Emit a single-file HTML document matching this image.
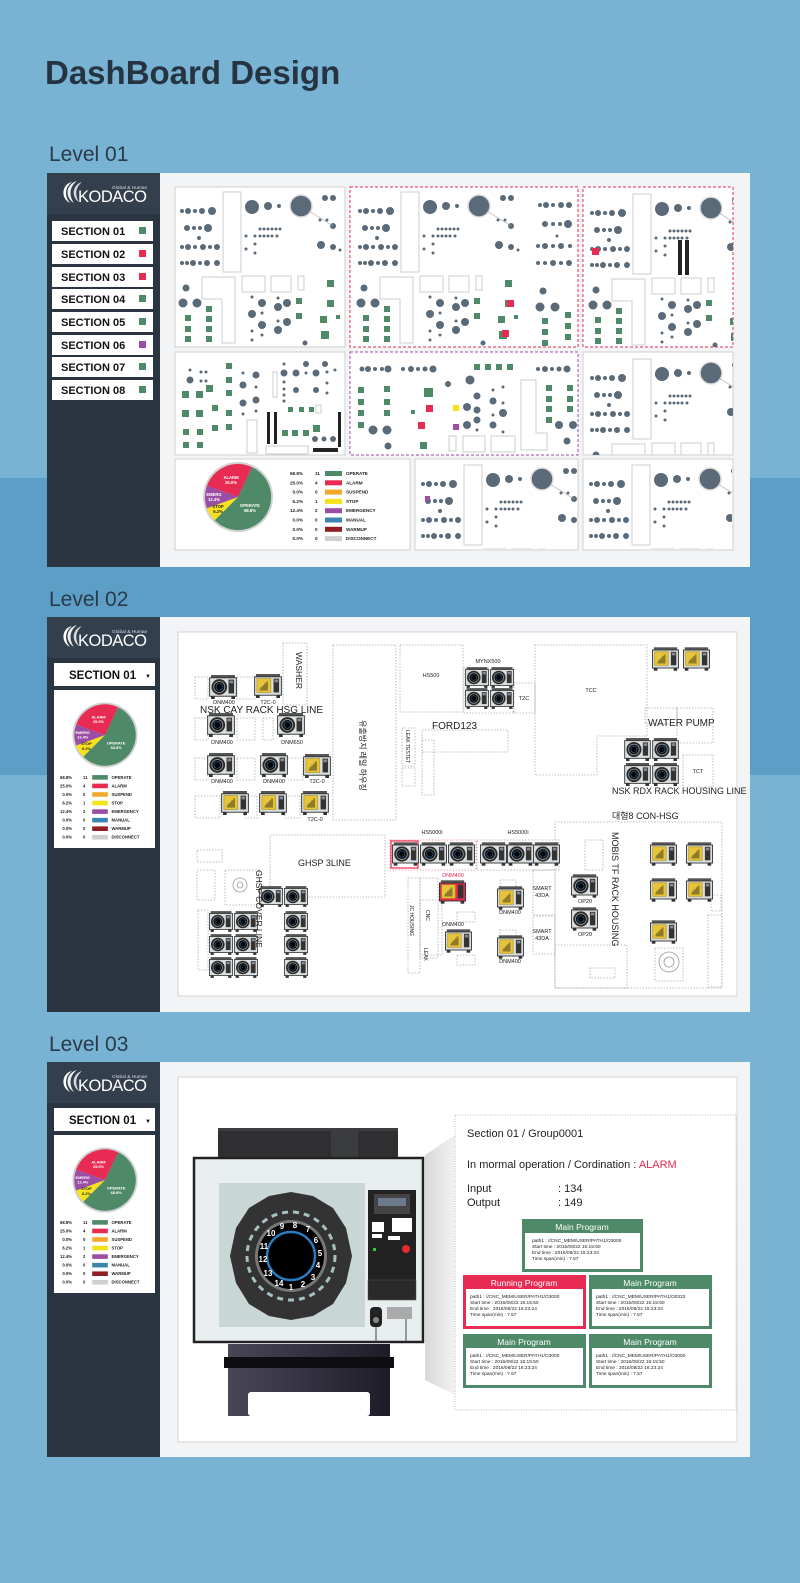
<!DOCTYPE html>
<html><head><meta charset="utf-8"><style>
html,body{margin:0;padding:0;background:#78b3d3;}
svg{display:block}
text{font-family:"Liberation Sans","Noto Sans CJK KR",sans-serif}
</style></head><body>
<svg width="800" height="1583" viewBox="0 0 800 1583" xmlns="http://www.w3.org/2000/svg">
<defs>
<symbol id="m" viewBox="0 0 30 26">
<rect x="2" y="0" width="26" height="3" fill="#555"/>
<rect x="0.5" y="3" width="29" height="20" fill="#d9dfe0" stroke="#333" stroke-width="1"/>
<circle cx="11" cy="13" r="8.5" fill="#2a2a2a"/>
<circle cx="11" cy="13" r="6" fill="#111" stroke="#aaa" stroke-width="0.8"/>
<circle cx="11" cy="13" r="3.5" fill="#000" stroke="#2a7bc0" stroke-width="0.6"/>
<rect x="21" y="5" width="6" height="15" fill="#333"/>
<rect x="22" y="6" width="4" height="3" fill="#889"/>
<rect x="2" y="23" width="4" height="3" fill="#333"/><rect x="24" y="23" width="4" height="3" fill="#333"/>
</symbol>
<symbol id="y" viewBox="0 0 30 26">
<rect x="2" y="0" width="26" height="3" fill="#555"/>
<rect x="0.5" y="3" width="29" height="20" fill="#d9dfe0" stroke="#333" stroke-width="1"/>
<rect x="3" y="5" width="15" height="15" fill="#e8c43a" stroke="#b6971e" stroke-width="0.8"/>
<path d="M6 18 L15 18 L15 8 L13 8 L13 10 L11 10 L11 12 L9 12 L9 14 L7 14 L7 16 L6 16 Z" fill="#8d7a2b"/>
<rect x="21" y="5" width="6" height="15" fill="#333"/>
<rect x="22" y="6" width="4" height="3" fill="#889"/>
<rect x="2" y="23" width="4" height="3" fill="#333"/><rect x="24" y="23" width="4" height="3" fill="#333"/>
</symbol>
<symbol id="yr" viewBox="0 0 30 26">
<rect x="2" y="0" width="26" height="3" fill="#555"/>
<rect x="0.5" y="3" width="29" height="20" fill="#e8284c" stroke="#333" stroke-width="1"/>
<rect x="3" y="5" width="15" height="15" fill="#e8c43a" stroke="#b6971e" stroke-width="0.8"/>
<path d="M6 18 L15 18 L15 8 L13 8 L13 10 L11 10 L11 12 L9 12 L9 14 L7 14 L7 16 L6 16 Z" fill="#8d7a2b"/>
<rect x="21" y="5" width="6" height="15" fill="#333"/>
<rect x="2" y="23" width="4" height="3" fill="#333"/><rect x="24" y="23" width="4" height="3" fill="#333"/>
</symbol>
<g id="panelA">
<g fill="#5a6a78">
<circle cx="7" cy="24" r="2"/><circle cx="13" cy="24" r="3"/><circle cx="20" cy="24" r="2"/><circle cx="27" cy="24" r="3"/><circle cx="37" cy="24" r="4"/>
<circle cx="12" cy="41" r="3"/><circle cx="19" cy="41" r="2"/><circle cx="25" cy="41" r="2"/><circle cx="33" cy="41" r="4"/>
<circle cx="24" cy="51" r="2"/>
<circle cx="7" cy="60" r="2"/><circle cx="13" cy="60" r="3"/><circle cx="20" cy="60" r="2"/><circle cx="28" cy="60" r="3"/><circle cx="35" cy="60" r="2"/><circle cx="42" cy="60" r="3"/>
<circle cx="7" cy="76" r="2"/><circle cx="12" cy="76" r="2"/><circle cx="18" cy="76" r="3"/><circle cx="25" cy="76" r="2"/><circle cx="32" cy="76" r="3"/><circle cx="42" cy="76" r="3"/>
<circle cx="77" cy="20" r="7"/><circle cx="93" cy="19" r="4"/><circle cx="104" cy="19" r="2"/>
<circle cx="126" cy="19" r="11" stroke="#ddd" stroke-width="1.5"/>
<circle cx="150" cy="11" r="3"/><circle cx="158" cy="11" r="3"/>
<circle cx="85" cy="42" r="1.5"/><circle cx="89" cy="42" r="1.5"/><circle cx="93" cy="42" r="1.5"/><circle cx="97" cy="42" r="1.5"/><circle cx="101" cy="42" r="1.5"/><circle cx="105" cy="42" r="1.5"/>
<circle cx="80" cy="49" r="1.5"/><circle cx="85" cy="49" r="1.5"/><circle cx="89" cy="49" r="1.5"/><circle cx="93" cy="49" r="1.5"/><circle cx="97" cy="49" r="1.5"/><circle cx="102" cy="49" r="1.5"/>
<circle cx="71" cy="49" r="1.5"/><circle cx="71" cy="62" r="1.5"/><circle cx="80" cy="57" r="1.5"/><circle cx="80" cy="66" r="1.5"/>
<circle cx="145" cy="33" r="1.5"/><circle cx="152" cy="33" r="1.5"/><circle cx="158" cy="39" r="3"/>
<circle cx="146" cy="58" r="4"/><circle cx="158" cy="60" r="3"/><circle cx="165" cy="63" r="1.5"/>
<circle cx="11" cy="101" r="3.5"/><circle cx="8" cy="116" r="4.5"/><circle cx="22" cy="116" r="4.5"/>
<circle cx="77" cy="110" r="1.5"/><circle cx="87" cy="116" r="4"/><circle cx="77" cy="127" r="4"/><circle cx="87" cy="126" r="1.5"/><circle cx="87" cy="138" r="4"/><circle cx="77" cy="144" r="1.5"/><circle cx="87" cy="148" r="1.5"/><circle cx="77" cy="153" r="1.5"/>
<circle cx="103" cy="111" r="1.5"/><circle cx="112" cy="116" r="4"/><circle cx="103" cy="120" r="4"/><circle cx="103" cy="134" r="1.5"/><circle cx="112" cy="135" r="4"/><circle cx="103" cy="143" r="4"/>
<circle cx="130" cy="156" r="2.5"/>
</g>
<line x1="134" y1="24" x2="158" y2="39" stroke="#aaa" stroke-width="0.6"/>
<g fill="none" stroke="#ccc" stroke-width="1">
<rect x="48" y="5" width="18" height="80"/>
<path d="M27 90 L60 90 L60 156 L47 156 L47 112 L27 112 Z"/>
<rect x="67" y="89" width="23" height="16"/><rect x="96" y="89" width="20" height="16"/><rect x="123" y="89" width="6" height="14"/>
</g>
<g fill="#4f8a68">
<rect x="10" y="128" width="6" height="6"/><rect x="10" y="139" width="6" height="6"/><rect x="10" y="149" width="6" height="6"/>
<rect x="31" y="119" width="6" height="6"/><rect x="31" y="129" width="6" height="6"/><rect x="31" y="139" width="6" height="6"/><rect x="31" y="149" width="6" height="6"/>
<rect x="121" y="111" width="6" height="6"/><rect x="121" y="126" width="6" height="6"/>
<rect x="152" y="93" width="7" height="7"/><rect x="152" y="113" width="7" height="7"/><rect x="145" y="129" width="7" height="7"/><rect x="161" y="128" width="4" height="4"/><rect x="146" y="144" width="8" height="8"/>
</g>
</g>
<g id="pie">
<circle cx="0" cy="0" r="35" fill="#d0d0d0"/>
<path d="M0 0 L14 -29.9 A33 33 0 1 1 -23.3 23.3 Z" fill="#4f8a68"/>
<path d="M0 0 L-23.3 23.3 A33 33 0 0 1 -31 11.3 Z" fill="#f6e21c"/>
<path d="M0 0 L-31 11.3 A33 33 0 0 1 -31 -11.3 Z" fill="#9b4ea6"/>
<path d="M0 0 L-31 -11.3 A33 33 0 0 1 14 -29.9 Z" fill="#e82b52"/>
<g font-size="4.2" font-weight="bold" fill="#fff" text-anchor="middle">
<text x="-7" y="-18">ALARM</text><text x="-7" y="-13">25.0%</text>
<text x="-24" y="-1">EMERG</text><text x="-24" y="4">12.4%</text>
<text x="-20" y="11" fill="#222">STOP</text><text x="-20" y="16" fill="#222">6.2%</text>
<text x="12" y="10">OPERATE</text><text x="12" y="15">68.8%</text>
</g>
</g>
<g id="legend" font-size="4.6" font-weight="bold" fill="#222">
<text x="13" y="3" text-anchor="end">68.8%</text><text x="25" y="3">11</text><rect x="35" y="-1" width="17" height="5" fill="#4f8a68"/><text x="56" y="3">OPERATE</text>
<text x="13" y="12.3" text-anchor="end">25.0%</text><text x="25" y="12.3">4</text><rect x="35" y="8.3" width="17" height="5" fill="#e82b52"/><text x="56" y="12.3">ALARM</text>
<text x="13" y="21.6" text-anchor="end">0.0%</text><text x="25" y="21.6">0</text><rect x="35" y="17.6" width="17" height="5" fill="#f0a92a"/><text x="56" y="21.6">SUSPEND</text>
<text x="13" y="30.9" text-anchor="end">6.2%</text><text x="25" y="30.9">1</text><rect x="35" y="26.9" width="17" height="5" fill="#f6e21c"/><text x="56" y="30.9">STOP</text>
<text x="13" y="40.2" text-anchor="end">12.4%</text><text x="25" y="40.2">2</text><rect x="35" y="36.2" width="17" height="5" fill="#9b4ea6"/><text x="56" y="40.2">EMERGENCY</text>
<text x="13" y="49.5" text-anchor="end">0.0%</text><text x="25" y="49.5">0</text><rect x="35" y="45.5" width="17" height="5" fill="#3b84b0"/><text x="56" y="49.5">MANUAL</text>
<text x="13" y="58.8" text-anchor="end">0.0%</text><text x="25" y="58.8">0</text><rect x="35" y="54.8" width="17" height="5" fill="#8f1d22"/><text x="56" y="58.8">WARMUP</text>
<text x="13" y="68.1" text-anchor="end">0.0%</text><text x="25" y="68.1">0</text><rect x="35" y="64.1" width="17" height="5" fill="#cfcfcf"/><text x="56" y="68.1">DISCONNECT</text>
</g>
<g id="logo">
<path d="M20 6 C10 8 8 22 18 27 C12 20 13 11 20 6 Z" fill="#fff"/>
<path d="M25 5 C14 8 12 21 22 27 C17 20 17 11 25 5 Z" fill="#fff" opacity="0.9"/>
<path d="M30 6 C20 9 19 21 27 26 C23 19 23 12 30 6 Z" fill="#fff" opacity="0.8"/>
<text x="26" y="26" font-size="16.5" fill="#fff" letter-spacing="-0.5">KODACO</text>
<text x="60" y="13" font-size="4.8" fill="#dde">Global &amp; Human</text>
</g>
<clipPath id="cC"><rect x="0" y="0" width="148" height="158"/></clipPath>
<clipPath id="cS"><rect x="0" y="0" width="148" height="101"/></clipPath>
<clipPath id="cT"><rect x="0" y="0" width="161" height="89"/></clipPath>
<clipPath id="cI"><rect x="0" y="0" width="148" height="89"/></clipPath>
<linearGradient id="bg3" x1="0" x2="1"><stop offset="0" stop-color="#4a4658"/><stop offset="1" stop-color="#1e1c28"/></linearGradient>
<linearGradient id="sh" x1="0" x2="1"><stop offset="0" stop-color="#d8d8d8"/><stop offset="1" stop-color="#f2f2f2"/></linearGradient>
</defs>

<rect x="0" y="0" width="800" height="1583" fill="#78b3d3"/>
<rect x="0" y="478" width="800" height="297" fill="#5d9ec6"/>

<text x="45" y="84" font-size="33" font-weight="bold" fill="#263442">DashBoard Design</text>
<text x="49" y="161" font-size="21" fill="#2a3a4a">Level 01</text>
<text x="49" y="606" font-size="21" fill="#2a3a4a">Level 02</text>
<text x="49" y="1051" font-size="21" fill="#2a3a4a">Level 03</text>

<!-- LEVEL 01 -->
<rect x="47" y="173" width="703" height="394" fill="#f3f4f6"/>
<rect x="47" y="173" width="113" height="394" fill="#2b3541"/>
<rect x="47" y="173" width="113" height="41" fill="#333f4c"/>
<use href="#logo" x="52" y="176"/>
<g font-size="11" font-weight="bold" fill="#111">
<rect x="52" y="221" width="101" height="20" fill="#fff"/><text x="61" y="235">SECTION 01</text><rect x="139" y="227" width="7" height="7" fill="#4f8a68"/>
<rect x="52" y="244" width="101" height="20" fill="#fff"/><text x="61" y="258">SECTION 02</text><rect x="139" y="250" width="7" height="7" fill="#e82b52"/>
<rect x="52" y="267" width="101" height="20" fill="#fff"/><text x="61" y="281">SECTION 03</text><rect x="139" y="273" width="7" height="7" fill="#e82b52"/>
<rect x="52" y="289" width="101" height="20" fill="#fff"/><text x="61" y="303">SECTION 04</text><rect x="139" y="295" width="7" height="7" fill="#4f8a68"/>
<rect x="52" y="312" width="101" height="20" fill="#fff"/><text x="61" y="326">SECTION 05</text><rect x="139" y="318" width="7" height="7" fill="#4f8a68"/>
<rect x="52" y="335" width="101" height="20" fill="#fff"/><text x="61" y="349">SECTION 06</text><rect x="139" y="341" width="7" height="7" fill="#9b4ea6"/>
<rect x="52" y="357" width="101" height="20" fill="#fff"/><text x="61" y="371">SECTION 07</text><rect x="139" y="363" width="7" height="7" fill="#4f8a68"/>
<rect x="52" y="380" width="101" height="20" fill="#fff"/><text x="61" y="394">SECTION 08</text><rect x="139" y="386" width="7" height="7" fill="#4f8a68"/>
</g>

<g fill="#fff" stroke="#cfcfcf">
<rect x="175" y="187" width="170" height="160"/>
<rect x="175" y="352" width="170" height="103"/>
<rect x="583" y="352" width="150" height="103"/>
<rect x="175" y="459" width="235" height="91"/>
<rect x="415" y="459" width="163" height="91"/>
<rect x="583" y="459" width="150" height="91"/>
</g>
<rect x="350" y="187" width="228" height="160" fill="#fff" stroke="#e82b52" stroke-dasharray="3,2"/>
<rect x="583" y="187" width="150" height="160" fill="#fff" stroke="#e82b52" stroke-dasharray="3,2"/>
<rect x="350" y="352" width="228" height="103" fill="#fff" stroke="#9b4ea6" stroke-dasharray="3,2"/>

<use href="#panelA" x="175" y="187"/>
<use href="#panelA" x="353" y="187"/>
<g fill="#5a6a78">
<circle cx="540" cy="205" r="2"/><circle cx="546" cy="205" r="3"/><circle cx="553" cy="205" r="2"/><circle cx="561" cy="205" r="3"/><circle cx="569" cy="205" r="3"/>
<circle cx="545" cy="224" r="3"/><circle cx="553" cy="224" r="2"/><circle cx="560" cy="224" r="2"/><circle cx="568" cy="224" r="4"/>
<circle cx="557" cy="236" r="1.5"/>
<circle cx="538" cy="246" r="2"/><circle cx="545" cy="246" r="3"/><circle cx="553" cy="246" r="2"/><circle cx="561" cy="246" r="3"/><circle cx="570" cy="246" r="2"/>
<circle cx="538" cy="263" r="2"/><circle cx="545" cy="263" r="2"/><circle cx="553" cy="263" r="3"/><circle cx="561" cy="263" r="2"/><circle cx="569" cy="263" r="3"/>
<circle cx="543" cy="291" r="3.5"/><circle cx="540" cy="307" r="4.5"/><circle cx="555" cy="307" r="4.5"/>
</g>
<g fill="#4f8a68"><rect x="542" y="318" width="6" height="6"/><rect x="542" y="329" width="6" height="6"/><rect x="542" y="340" width="6" height="6"/><rect x="565" y="312" width="6" height="6"/><rect x="565" y="323" width="6" height="6"/><rect x="565" y="334" width="6" height="6"/></g>
<g fill="#e82b52"><rect x="507" y="300" width="7" height="7"/><rect x="502" y="330" width="7" height="7"/></g>
<!-- panel C -->
<g transform="translate(585,189)"><use href="#panelA" clip-path="url(#cC)"/></g>
<rect x="592" y="248" width="7" height="7" fill="#e82b52"/>
<rect x="678" y="240" width="4" height="35" fill="#222"/><rect x="685" y="240" width="4" height="35" fill="#222"/>
<!-- panel D -->
<g fill="#5a6a78">
<circle cx="190" cy="370" r="1.5"/><circle cx="190" cy="380" r="3.5"/><circle cx="201" cy="372" r="1.5"/><circle cx="206" cy="372" r="1.5"/><circle cx="201" cy="381" r="1.5"/><circle cx="206" cy="381" r="1.5"/>
<circle cx="243" cy="373" r="1.5"/><circle cx="256" cy="375" r="3.5"/><circle cx="243" cy="385" r="3.5"/><circle cx="256" cy="387" r="1.5"/><circle cx="243" cy="403" r="3.5"/><circle cx="256" cy="400" r="3.5"/><circle cx="243" cy="414" r="1.5"/><circle cx="256" cy="411" r="1.5"/>
<circle cx="284" cy="364" r="1.5"/><circle cx="284" cy="373" r="3.5"/><circle cx="296" cy="373" r="3.5"/><circle cx="306" cy="364" r="3"/><circle cx="306" cy="373" r="1.5"/><circle cx="316" cy="373" r="3.5"/><circle cx="325" cy="364" r="3"/><circle cx="327" cy="372" r="1.5"/><circle cx="335" cy="370" r="1.5"/>
<circle cx="284" cy="382" r="1.5"/><circle cx="284" cy="389" r="1.5"/><circle cx="284" cy="395" r="1.5"/><circle cx="284" cy="401" r="1.5"/><circle cx="296" cy="390" r="3"/><circle cx="316" cy="390" r="3"/><circle cx="327" cy="383" r="1.5"/><circle cx="327" cy="393" r="1.5"/>
<circle cx="315" cy="439" r="3"/><circle cx="324" cy="439" r="2.5"/><circle cx="333" cy="439" r="3"/>
</g>
<g fill="#4f8a68">
<rect x="182" y="391" width="7" height="7"/><rect x="182" y="410" width="7" height="7"/><rect x="183" y="429" width="6" height="6"/><rect x="183" y="442" width="6" height="6"/>
<rect x="196" y="391" width="7" height="7"/><rect x="196" y="410" width="7" height="7"/><rect x="197" y="429" width="6" height="6"/><rect x="197" y="442" width="6" height="6"/>
<rect x="206" y="385" width="7" height="7"/><rect x="212" y="405" width="6" height="6"/><rect x="212" y="425" width="6" height="6"/>
<rect x="226" y="363" width="6" height="6"/><rect x="226" y="377" width="6" height="6"/><rect x="226" y="390" width="6" height="6"/><rect x="226" y="410" width="6" height="6"/><rect x="226" y="424" width="6" height="6"/>
<rect x="288" y="407" width="5" height="5"/><rect x="299" y="407" width="5" height="5"/><rect x="309" y="407" width="5" height="5"/>
<rect x="282" y="430" width="6" height="6"/><rect x="292" y="430" width="6" height="6"/><rect x="303" y="430" width="6" height="6"/><rect x="313" y="425" width="7" height="7"/>
</g>
<g fill="#222"><rect x="267" y="412" width="3" height="32"/><rect x="274" y="412" width="3" height="32"/><rect x="338" y="412" width="3" height="35"/><rect x="313" y="448" width="25" height="4"/></g>
<g fill="none" stroke="#ccc"><rect x="247" y="420" width="10" height="33"/><rect x="266" y="446" width="42" height="8"/><rect x="273" y="372" width="4" height="25"/><rect x="316" y="405" width="5" height="8"/></g>
<!-- panel E -->
<g fill="#5a6a78">
<circle cx="362" cy="369" r="2.5"/><circle cx="368" cy="369" r="3"/><circle cx="375" cy="369" r="2"/><circle cx="382" cy="369" r="2"/><circle cx="388" cy="369" r="3.5"/>
<circle cx="403" cy="369" r="2"/><circle cx="411" cy="369" r="3"/><circle cx="418" cy="369" r="2"/><circle cx="425" cy="369" r="2.5"/><circle cx="433" cy="369" r="3.5"/>
<circle cx="448" cy="384" r="3"/><circle cx="470" cy="380" r="4.5"/>
<circle cx="467" cy="407" r="4"/><circle cx="477" cy="396" r="3.5"/><circle cx="477" cy="410" r="3.5"/><circle cx="477" cy="420" r="3.5"/><circle cx="467" cy="425" r="4"/><circle cx="477" cy="430" r="1.5"/>
<circle cx="493" cy="390" r="1.5"/><circle cx="503" cy="387" r="1.5"/><circle cx="493" cy="401" r="3.5"/><circle cx="503" cy="403" r="1.5"/><circle cx="503" cy="413" r="4"/><circle cx="493" cy="415" r="1.5"/><circle cx="493" cy="425" r="3.5"/><circle cx="503" cy="432" r="1.5"/>
<circle cx="373" cy="430" r="4.5"/><circle cx="387" cy="430" r="4.5"/><circle cx="388" cy="446" r="3.5"/>
<circle cx="538" cy="369" r="2"/><circle cx="545" cy="369" r="3"/><circle cx="552" cy="369" r="2"/><circle cx="559" cy="369" r="2.5"/><circle cx="567" cy="369" r="3.5"/>
<circle cx="559" cy="425" r="4"/><circle cx="573" cy="425" r="4"/><circle cx="567" cy="441" r="3.5"/>
</g>
<g fill="#4f8a68">
<rect x="358" y="387" width="6" height="6"/><rect x="358" y="399" width="6" height="6"/><rect x="358" y="410" width="6" height="6"/><rect x="358" y="422" width="6" height="6"/>
<rect x="384" y="386" width="6" height="6"/><rect x="384" y="399" width="6" height="6"/><rect x="384" y="410" width="6" height="6"/>
<rect x="424" y="388" width="9" height="9"/><rect x="411" y="410" width="4" height="4"/><rect x="420" y="442" width="7" height="7"/>
<rect x="474" y="364" width="6" height="6"/><rect x="485" y="364" width="6" height="6"/><rect x="496" y="364" width="6" height="6"/><rect x="507" y="364" width="6" height="6"/>
<rect x="546" y="385" width="6" height="6"/><rect x="546" y="396" width="6" height="6"/><rect x="546" y="406" width="6" height="6"/><rect x="546" y="417" width="6" height="6"/>
<rect x="567" y="385" width="6" height="6"/><rect x="567" y="396" width="6" height="6"/><rect x="567" y="406" width="6" height="6"/>
</g>
<rect x="426" y="405" width="7" height="7" fill="#e82b52"/><rect x="418" y="422" width="7" height="7" fill="#e82b52"/>
<rect x="453" y="405" width="6" height="6" fill="#f6e21c"/><rect x="453" y="424" width="6" height="6" fill="#9b4ea6"/>
<g fill="none" stroke="#ccc"><rect x="449" y="436" width="7" height="15"/><rect x="463" y="436" width="22" height="16"/><rect x="491" y="436" width="24" height="16"/><path d="M521 380 L536 380 L536 433 L547 433 L547 450 L521 450 Z"/></g>
<!-- panel F -->
<g transform="translate(585,354)"><use href="#panelA" clip-path="url(#cS)"/></g>
<!-- panel G pie -->
<use href="#pie" x="238" y="497"/>
<use href="#legend" x="290" y="472"/>
<!-- panel H -->
<g transform="translate(416,460)"><use href="#panelA" clip-path="url(#cT)"/></g>
<rect x="425" y="496" width="5" height="5" fill="#9b4ea6"/>
<!-- panel I -->
<g transform="translate(584,460)"><use href="#panelA" clip-path="url(#cI)"/></g>

<!-- LEVEL 02 -->
<rect x="47" y="617" width="703" height="395" fill="#f3f4f6"/>
<rect x="47" y="617" width="113" height="395" fill="#2b3541"/>
<rect x="47" y="617" width="113" height="41" fill="#333f4c"/>
<use href="#logo" x="52" y="620"/>
<rect x="54" y="663" width="101" height="23" fill="#fff"/>
<text x="69" y="679" font-size="11.5" font-weight="bold" fill="#111">SECTION 01</text><text x="145" y="678" font-size="6" fill="#111">▼</text>
<rect x="54" y="690" width="101" height="158" fill="#fff"/>
<use href="#pie" transform="translate(105,735) scale(0.93)"/>
<use href="#legend" transform="translate(60,776) scale(0.92)"/>

<rect x="178" y="632" width="559" height="364" fill="#fff" stroke="#d5d5d5"/>
<g fill="none" stroke="#aaa" stroke-dasharray="1.5,1.5" stroke-width="0.8">
<rect x="283" y="643" width="24" height="62"/>
<rect x="333" y="645" width="63" height="175"/>
<rect x="400" y="645" width="63" height="67"/>
<rect x="464" y="668" width="50" height="45"/>
<rect x="513" y="683" width="22" height="30"/>
<path d="M535 645 L647 645 L647 736 L597 736 L597 775 L535 775 Z"/>
<rect x="402" y="728" width="13" height="38"/><rect x="402" y="768" width="13" height="18"/>
<rect x="422" y="730" width="86" height="22"/><rect x="422" y="740" width="12" height="55"/>
<rect x="645" y="708" width="32" height="16"/><rect x="677" y="708" width="36" height="35"/>
<rect x="683" y="755" width="30" height="32"/>
<rect x="195" y="677" width="13" height="22"/><rect x="237" y="677" width="18" height="22"/><rect x="195" y="718" width="13" height="22"/><rect x="237" y="718" width="18" height="22"/><rect x="263" y="718" width="10" height="22"/>
<rect x="195" y="758" width="13" height="22"/><rect x="237" y="758" width="18" height="22"/><rect x="285" y="758" width="18" height="22"/>
<rect x="195" y="796" width="25" height="22"/><rect x="245" y="796" width="12" height="22"/><rect x="285" y="796" width="15" height="22"/>
<rect x="270" y="835" width="115" height="62"/>
<rect x="197" y="850" width="25" height="12"/><rect x="197" y="870" width="18" height="30"/><rect x="225" y="870" width="35" height="35"/><rect x="198" y="910" width="10" height="60"/>
<rect x="390" y="840" width="86" height="30" stroke="#e88"/><rect x="477" y="840" width="82" height="30"/>
<rect x="420" y="878" width="18" height="80"/><rect x="408" y="878" width="12" height="95"/><rect x="420" y="900" width="22" height="55"/>
<rect x="533" y="870" width="22" height="45"/><rect x="533" y="916" width="22" height="38"/>
<rect x="500" y="880" width="16" height="10"/><rect x="500" y="930" width="16" height="10"/><rect x="457" y="912" width="18" height="10"/><rect x="457" y="955" width="18" height="10"/>
<rect x="555" y="822" width="167" height="166"/>
<rect x="585" y="840" width="18" height="30"/><rect x="555" y="945" width="72" height="43"/><rect x="590" y="968" width="25" height="10"/>
<rect x="655" y="948" width="28" height="33"/><rect x="708" y="915" width="14" height="72"/><rect x="711" y="895" width="10" height="16"/>
</g>
<circle cx="669" cy="962" r="10" fill="none" stroke="#999" stroke-width="0.8"/><circle cx="669" cy="962" r="5" fill="none" stroke="#999" stroke-width="0.8"/>
<circle cx="240" cy="885" r="7" fill="none" stroke="#999" stroke-width="0.8"/><circle cx="240" cy="885" r="3" fill="none" stroke="#999" stroke-width="0.8"/>

<g>
<use href="#m" x="209" y="675" width="28" height="24"/><use href="#y" x="254" y="674" width="28" height="24"/>
<use href="#m" x="207" y="713" width="28" height="24"/><use href="#m" x="277" y="713" width="28" height="24"/>
<use href="#m" x="207" y="753" width="28" height="24"/><use href="#m" x="260" y="753" width="28" height="24"/><use href="#y" x="303" y="754" width="28" height="24"/>
<use href="#y" x="221" y="791" width="28" height="24"/><use href="#y" x="259" y="791" width="28" height="24"/><use href="#y" x="301" y="791" width="28" height="24"/>
<use href="#m" x="465" y="667" width="24" height="21"/><use href="#m" x="490" y="667" width="24" height="21"/><use href="#m" x="465" y="688" width="24" height="21"/><use href="#m" x="490" y="688" width="24" height="21"/>
<use href="#y" x="652" y="647" width="27" height="24"/><use href="#y" x="683" y="647" width="27" height="24"/>
<use href="#m" x="624" y="738" width="27" height="23"/><use href="#m" x="652" y="738" width="27" height="23"/><use href="#m" x="624" y="763" width="27" height="23"/><use href="#m" x="652" y="763" width="27" height="23"/>
<rect x="391" y="841" width="27" height="27" fill="none" stroke="#e82b52" stroke-width="1.2"/>
<use href="#m" x="392" y="842" width="27" height="24"/><use href="#m" x="420" y="842" width="27" height="24"/><use href="#m" x="448" y="842" width="27" height="24"/>
<use href="#m" x="480" y="842" width="27" height="24"/><use href="#m" x="507" y="842" width="27" height="24"/><use href="#m" x="533" y="842" width="27" height="24"/>
<use href="#yr" x="439" y="880" width="27" height="24"/>
<use href="#y" x="445" y="929" width="27" height="24"/><use href="#y" x="497" y="886" width="27" height="24"/><use href="#y" x="497" y="935" width="27" height="24"/>
<use href="#m" x="571" y="874" width="27" height="24"/><use href="#m" x="571" y="907" width="27" height="24"/>
<use href="#y" x="650" y="842" width="27" height="24"/><use href="#y" x="686" y="842" width="27" height="24"/><use href="#y" x="650" y="878" width="27" height="24"/><use href="#y" x="686" y="878" width="27" height="24"/><use href="#y" x="650" y="920" width="27" height="24"/>
<use href="#m" x="259" y="886" width="24" height="21"/><use href="#m" x="284" y="886" width="24" height="21"/>
<use href="#m" x="209" y="911" width="24" height="21"/><use href="#m" x="234" y="911" width="24" height="21"/><use href="#m" x="284" y="911" width="24" height="21"/>
<use href="#m" x="209" y="934" width="24" height="21"/><use href="#m" x="234" y="934" width="24" height="21"/><use href="#m" x="284" y="934" width="24" height="21"/>
<use href="#m" x="209" y="957" width="24" height="21"/><use href="#m" x="234" y="957" width="24" height="21"/><use href="#m" x="284" y="957" width="24" height="21"/>
</g>
<g font-size="5.5" fill="#222" text-anchor="middle">
<text x="224" y="704">DNM400</text><text x="268" y="704">T2C-0</text>
<text x="222" y="744">DNM400</text><text x="292" y="744">DNM650</text>
<text x="222" y="783">DNM400</text><text x="274" y="783">DNM400</text><text x="317" y="783">T2C-0</text><text x="315" y="821">T2C-0</text>
<text x="488" y="663">MYNX500</text><text x="431" y="677">HS500</text><text x="524" y="700">T2C</text><text x="591" y="692">TCC</text><text x="698" y="773">TCT</text>
<text x="432" y="834">HS5000i</text><text x="518" y="834">HS5000i</text>
<text x="453" y="877" fill="#e82b52">DNM400</text><text x="453" y="926">DNM400</text><text x="510" y="914">DNM400</text><text x="510" y="963">DNM400</text>
<text x="542" y="890">SMART</text><text x="542" y="897">43DA</text><text x="542" y="933">SMART</text><text x="542" y="940">43DA</text>
<text x="585" y="903">OP20</text><text x="585" y="936">OP20</text>
</g>
<g font-size="10" fill="#222">
<text x="200" y="713">NSK CAY RACK HSG LINE</text>
<text x="432" y="729">FORD123</text>
<text x="648" y="726">WATER PUMP</text>
<text x="612" y="794" font-size="9">NSK RDX RACK HOUSING LINE</text>
<text x="612" y="819" font-size="9">대형8 CON-HSG</text>
<text x="298" y="866" font-size="9">GHSP 3LINE</text>
</g>
<g font-size="8.5" fill="#222">
<text transform="translate(296,652) rotate(90)">WASHER</text>
<text transform="translate(360,720) rotate(90)" font-size="8">유출방지 레일 하우징</text>
<text transform="translate(406,730) rotate(90)" font-size="5">LEAK TESTET</text>
<text transform="translate(256,870) rotate(90)">GHSP COVER LINE</text>
<text transform="translate(612,832) rotate(90)" font-size="9">MOBIS TF RACK HOUSING</text>
<text transform="translate(410,905) rotate(90)" font-size="5">JC HOUSING</text>
<text transform="translate(426,910) rotate(90)" font-size="5">CNC</text>
<text transform="translate(424,948) rotate(90)" font-size="5">LEAK</text>
</g>

<!-- LEVEL 03 -->
<rect x="47" y="1062" width="703" height="395" fill="#f3f4f6"/>
<rect x="47" y="1062" width="113" height="395" fill="#2b3541"/>
<rect x="47" y="1062" width="113" height="41" fill="#333f4c"/>
<use href="#logo" x="52" y="1065"/>
<rect x="54" y="1108" width="101" height="23" fill="#fff"/>
<text x="69" y="1124" font-size="11.5" font-weight="bold" fill="#111">SECTION 01</text><text x="145" y="1123" font-size="6" fill="#111">▼</text>
<rect x="54" y="1135" width="101" height="158" fill="#fff"/>
<use href="#pie" transform="translate(105,1180) scale(0.93)"/>
<use href="#legend" transform="translate(60,1221) scale(0.92)"/>

<rect x="178" y="1077" width="559" height="365" fill="#fff" stroke="#d5d5d5"/>
<path d="M425 1155 L455 1135 L455 1395 L425 1380 Z" fill="url(#sh)"/>
<rect x="218" y="1128" width="180" height="30" fill="#2f2f31"/>
<rect x="218" y="1128" width="180" height="3" fill="#3d3d3f"/>
<rect x="331" y="1131" width="27" height="27" fill="#3b3c3e"/>
<rect x="194" y="1158" width="229" height="184" fill="#e8eef0" stroke="#222" stroke-width="2.5"/>
<rect x="219" y="1183" width="146" height="144" fill="#c9d6d6"/>
<polygon points="291,1192 313,1196 333,1208 346,1228 352,1256 346,1283 333,1304 313,1316 291,1320 269,1316 249,1304 236,1283 230,1256 236,1228 249,1208 269,1196" fill="#333"/>
<circle cx="291" cy="1256" r="44" fill="none" stroke="#a7c0c4" stroke-width="3" stroke-dasharray="6,5"/>
<circle cx="291" cy="1256" r="36" fill="#777"/>
<circle cx="291" cy="1256" r="33" fill="#000"/>
<circle cx="291" cy="1256" r="24" fill="#000" stroke="#2a7bc0" stroke-width="2.5"/>
<g font-size="8" fill="#fff" text-anchor="middle" font-weight="bold">
<text x="291" y="1290">1</text><text x="303" y="1287">2</text><text x="313" y="1280">3</text><text x="318" y="1268">4</text><text x="320" y="1256">5</text><text x="316" y="1243">6</text><text x="308" y="1232">7</text><text x="295" y="1228">8</text><text x="282" y="1229">9</text><text x="271" y="1236">10</text><text x="264" y="1249">11</text><text x="263" y="1262">12</text><text x="268" y="1276">13</text><text x="279" y="1286">14</text>
</g>
<rect x="368" y="1190" width="48" height="110" fill="#222"/>
<rect x="374" y="1194" width="36" height="20" fill="#444"/><rect x="378" y="1198" width="28" height="8" fill="#6a7a88"/>
<g fill="#fff"><rect x="372" y="1222" width="12" height="10"/><rect x="392" y="1218" width="20" height="14"/><rect x="372" y="1234" width="10" height="4"/><rect x="388" y="1236" width="12" height="4"/></g>
<circle cx="406" cy="1249" r="4" fill="#e82b2b"/><rect x="373" y="1248" width="3" height="3" fill="#3c3"/>
<rect x="368" y="1280" width="48" height="20" fill="#2a2a2a" stroke="#555" stroke-width="0.5"/>
<rect x="370" y="1307" width="12" height="20" rx="4" fill="#222"/><circle cx="376" cy="1320" r="3" fill="#888"/>
<rect x="387" y="1307" width="25" height="12" fill="#aaa"/>
<line x1="376" y1="1327" x2="376" y2="1342" stroke="#444"/><line x1="406" y1="1319" x2="406" y2="1342" stroke="#444"/>
<rect x="228" y="1344" width="162" height="72" fill="url(#bg3)"/>
<rect x="224" y="1357" width="170" height="11" fill="#0e0e12"/>
<rect x="248" y="1392" width="122" height="24" fill="#fff" rx="3"/>

<rect x="455" y="1115" width="281" height="295" fill="#fff" stroke="#bbb" stroke-dasharray="1,1.5"/>
<g font-size="11" fill="#222">
<text x="467" y="1137">Section 01 / Group0001</text>
<text x="467" y="1168">In mormal operation  /  Cordination : <tspan fill="#e82b52">ALARM</tspan></text>
<text x="467" y="1192">Input</text><text x="558" y="1192">: 134</text>
<text x="467" y="1206">Output</text><text x="558" y="1206">: 149</text>
</g>
<g font-size="4.8" fill="#222">
<rect x="522" y="1219" width="121" height="53" fill="#4f8a68"/><rect x="525" y="1233" width="115" height="36" fill="#fff"/>
<text x="582" y="1230" text-anchor="middle" font-size="8.5" fill="#fff">Main Program</text>
<text x="532" y="1242">path1 : //CNC_MEM/USER/PATH1/O3000</text><text x="532" y="1248">Start time   : 2016/08/22 16:15:50</text><text x="532" y="1254">End time     : 2016/08/22 16:23:24</text><text x="532" y="1260">Time span(min) : 7.57</text>

<rect x="463" y="1275" width="123" height="54" fill="#e82b52"/><rect x="466" y="1289" width="117" height="37" fill="#fff"/>
<text x="524" y="1286" text-anchor="middle" font-size="8.5" fill="#fff">Running Program</text>
<text x="470" y="1298">path1 : //CNC_MEM/USER/PATH1/O3000</text><text x="470" y="1304">Start time   : 2016/08/22 16:15:50</text><text x="470" y="1310">End time     : 2016/08/22 16:23:24</text><text x="470" y="1316">Time span(min) : 7.57</text>

<rect x="589" y="1275" width="123" height="54" fill="#4f8a68"/><rect x="592" y="1289" width="117" height="37" fill="#fff"/>
<text x="650" y="1286" text-anchor="middle" font-size="8.5" fill="#fff">Main Program</text>
<text x="596" y="1298">path1 : //CNC_MEM/USER/PATH1/O0333</text><text x="596" y="1304">Start time   : 2016/08/22 16:15:50</text><text x="596" y="1310">End time     : 2016/08/22 16:23:24</text><text x="596" y="1316">Time span(min) : 7.57</text>

<rect x="463" y="1334" width="123" height="54" fill="#4f8a68"/><rect x="466" y="1348" width="117" height="37" fill="#fff"/>
<text x="524" y="1345" text-anchor="middle" font-size="8.5" fill="#fff">Main Program</text>
<text x="470" y="1357">path1 : //CNC_MEM/USER/PATH1/O3000</text><text x="470" y="1363">Start time   : 2016/08/22 16:15:50</text><text x="470" y="1369">End time     : 2016/08/22 16:23:24</text><text x="470" y="1375">Time span(min) : 7.57</text>

<rect x="589" y="1334" width="123" height="54" fill="#4f8a68"/><rect x="592" y="1348" width="117" height="37" fill="#fff"/>
<text x="650" y="1345" text-anchor="middle" font-size="8.5" fill="#fff">Main Program</text>
<text x="596" y="1357">path1 : //CNC_MEM/USER/PATH1/O3000</text><text x="596" y="1363">Start time   : 2016/08/22 16:15:50</text><text x="596" y="1369">End time     : 2016/08/22 16:23:24</text><text x="596" y="1375">Time span(min) : 7.57</text>
</g>
</svg>
</body></html>
